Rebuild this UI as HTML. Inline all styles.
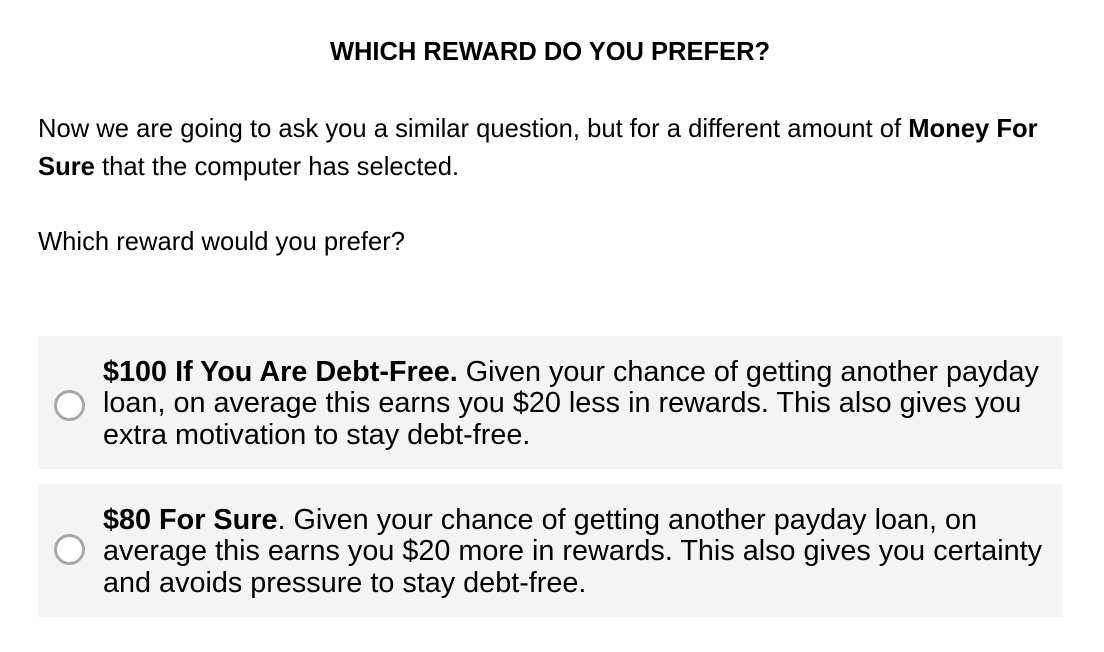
<!DOCTYPE html>
<html><head><meta charset="utf-8"><style>
html,body{margin:0;padding:0;background:#fff;width:1104px;height:652px;overflow:hidden;font-family:"Liberation Sans",Arial,sans-serif;color:#000;}
.a{position:absolute;white-space:nowrap;}
.h{left:0;width:1100px;text-align:center;top:40px;font-size:25.5px;line-height:25.5px;font-weight:bold;}
.p{left:38px;font-size:25.6px;line-height:38px;}
.box{position:absolute;left:38px;width:1024px;height:133px;background:#f4f4f4;}
.opt{position:absolute;left:65px;font-size:28.8px;line-height:31.5px;white-space:nowrap;}
.r{position:absolute;left:16px;width:25px;height:25px;border:3px solid #a8a8a8;border-radius:50%;box-sizing:content-box;background:#fff;}
</style></head><body>
<div class="a h">WHICH REWARD DO YOU PREFER?</div>
<div class="a p" style="top:110px">Now we are going to ask you a similar question, but for a different amount of <b>Money For</b><br><b>Sure</b> that the computer has selected.</div>
<div class="a p" style="top:223px">Which reward would you prefer?</div>
<div class="box" style="top:336px"><div class="r" style="top:54px"></div><div class="opt" style="top:20.5px"><b>$100 If You Are Debt-Free.</b> Given your chance of getting another payday<br>loan, on average this earns you $20 less in rewards. This also gives you<br>extra motivation to stay debt-free.</div></div>
<div class="box" style="top:484px"><div class="r" style="top:50px"></div><div class="opt" style="top:20.5px"><b>$80 For Sure</b>. Given your chance of getting another payday loan, on<br>average this earns you $20 more in rewards. This also gives you certainty<br>and avoids pressure to stay debt-free.</div></div>
</body></html>
